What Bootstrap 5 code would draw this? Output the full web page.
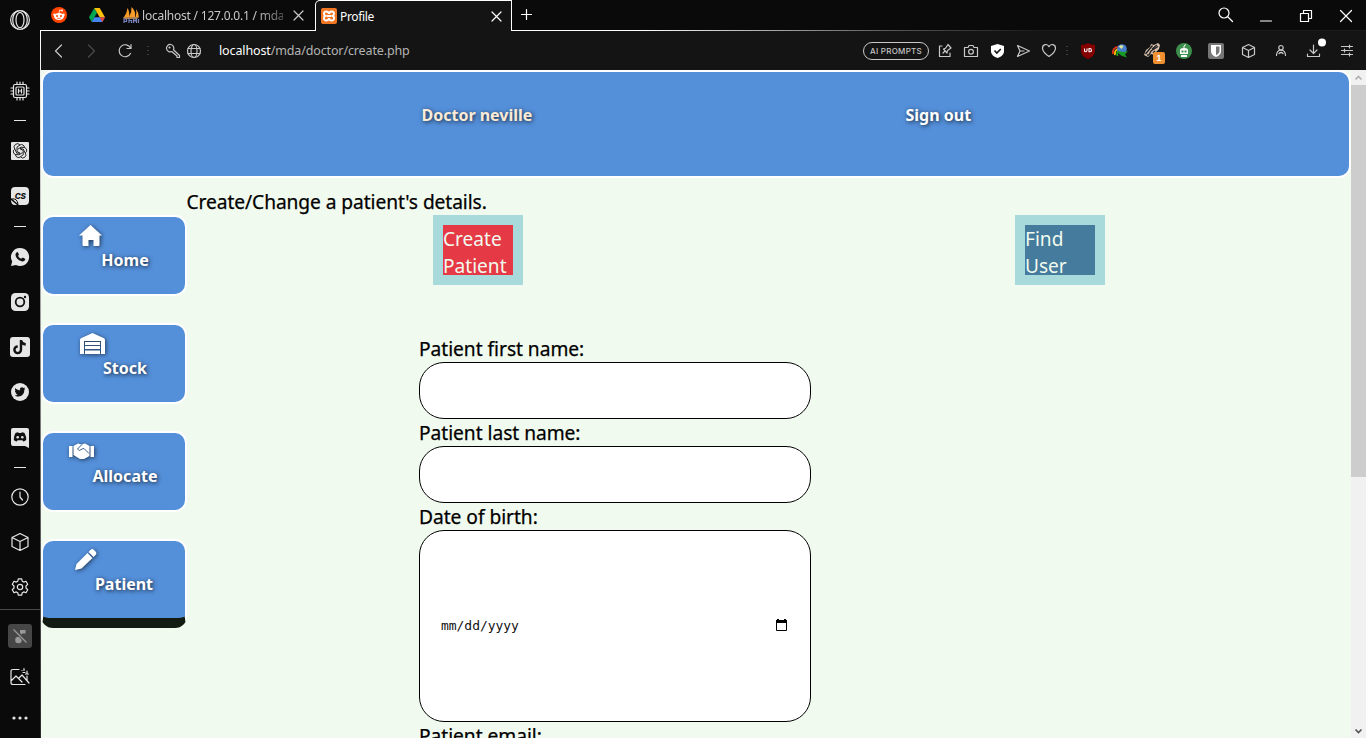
<!DOCTYPE html>
<html lang="en">
<head>
<meta charset="utf-8">
<title>Profile</title>
<link href="https://cdn.jsdelivr.net/npm/bootstrap@5.3.0/dist/css/bootstrap.min.css" rel="stylesheet">
<style>
html,body{height:100%}
body{margin:0;overflow:hidden;background:#0a0a0a;font-family:"Noto Sans",sans-serif;font-size:20px;line-height:27px;color:#000}
svg{display:block;flex:none;overflow:visible}
.ln{fill:none;stroke:currentColor;stroke-width:1.2;stroke-linecap:round;stroke-linejoin:round}
/* sidebar */
.side{width:41px;color:#e6e6e6;background:linear-gradient(#fff,#777 55%,#222) right 30px/1px 100% no-repeat #0a0a0a;background-position:40px 30px;padding-right:1px}
.side>div{display:flex;align-items:center;justify-content:center;flex:none;height:45px}
.side>.logo{height:40px;margin-bottom:28px}
.side>.dash{height:16px}.side>.dash.tight{height:15px}
.dash:before{content:"";width:12px;height:1px;background:#e6e6e6}
.side>.first{height:52px;border-top:1px solid #4a4a4a}
.first span{width:24px;height:24px;background:#464646;border-radius:3px;color:#999;display:grid;place-items:center}
.side>.shot{height:32px}.side>.dots{height:50px}
/* window chrome */
.tabs{height:31px;color:#c8c8c8;font:12px/18px "Noto Sans",sans-serif}
.tabs>.idle{width:274px;border-bottom:1px solid #fff;padding-left:10px}
.tabs>.active{width:197px;background:#141414;border:1px solid #fff;border-bottom:0;border-top-left-radius:5px;color:#fff;padding:0 10px 0 5px}
.tabs>.rest{background:linear-gradient(90deg,#fff 15%,#555 45%,#1a1a1a 62%) bottom/100% 1px no-repeat;color:#fff;padding:0 14px 0 9px}
.tabs span{padding-top:2px}
.fade-title{width:141px;white-space:nowrap;letter-spacing:-.22px;-webkit-mask:linear-gradient(90deg,#000 80%,#0006)}
.bar{height:39px;background:#141414;color:#c8c8c8;padding-left:1px;padding-right:3px}
.slot{display:flex;align-items:center;justify-content:center;flex:none;width:33px;position:relative}
.s26{width:26px}.s32{width:32px}.s21{width:21px}.s13{width:13px}.s8{width:10px}
.url{font:12.5px "Noto Sans",sans-serif;letter-spacing:-.13px;color:#b4b4b4;margin-left:15px}.url b{font-weight:400;color:#fff}
.pill{width:66px;height:18px;border:1px solid #c8c8c8;border-radius:9px;font:500 8px/16px Inter,sans-serif;letter-spacing:.28px;text-align:center;margin-right:3px;color:#c4c4c4}
.count{position:absolute;left:17px;top:9px;width:12px;height:12px;background:#f09030;border-radius:2px;color:#fff;font:bold 9px/12px "Liberation Sans",sans-serif;text-align:center}
/* page */
.page{background:#f0faee;min-height:0}
.banner{height:108px;background:#548fd9;border:2px solid #fff;border-radius:12px;padding:31px 0 0 378.5px;color:#fff;font-weight:700;font-size:16px;line-height:24px}
.banner span,.tile{text-shadow:1px 1px 4px rgba(0,0,0,.75)}
.banner .who{width:484px;color:#faebd7}
.intro{margin:10px 0 0 145.5px;font-size:19.2px;letter-spacing:-.08px;-webkit-text-stroke:.25px #000}
.menu{width:146px;gap:27px}
.tile{height:81px;background:#548fd9;border:2px solid #fff;border-radius:12px;color:#fff;font-weight:700;font-size:16px;line-height:22px;padding:7px 0 0 22px}
.tile.now{height:89px;border-bottom:10px solid #131c12;padding-left:20px}
.tile svg{margin-left:-23.5px;margin-top:-1px;margin-bottom:1px;filter:drop-shadow(1px 1px 2px rgba(0,0,0,.6));height:25px;width:25px}
.tile.now svg{margin-left:-22px}
.choice{width:90px;height:70px;border:10px solid #a8dadc;background:#e63946;color:#f1faee;font-size:19.1px;padding-top:1px}
.choice.find{background:#457b9d}
.entry{width:392px;margin:50px 0 0 232px;font-size:19.2px;letter-spacing:-.04px;-webkit-text-stroke:.25px #000}
.field{height:57px;background:#fff;border:1px solid #000;border-radius:25px}
.field.day{height:192px;padding:0 23px 0 21px;font:13px "DejaVu Sans Mono",monospace;-webkit-text-stroke:0}
.day span{margin-top:-1px;color:#111}.day svg{margin-top:-2px}
.scroll{width:15px;background:#f1f1f1;color:#555}
.thumb{height:392px;background:#cdcdcd}
</style>
</head>
<body>
<div class="d-flex h-100">
<aside class="side d-flex flex-column flex-shrink-0">
<div class="logo"><svg class="ln" width="20" height="20" viewBox="0 0 20 20"><circle cx="10" cy="10" r="9.4"/><ellipse cx="10" cy="10" rx="4" ry="7.7"/><path d="M8 .9C1 4 1 16 8 19.100M12 .9C19 4 19 16 12 19.100"/></svg></div>
<div><svg class="ln" width="18" height="18" viewBox="0 0 18 18"><rect x="2.500" y="2.500" width="13" height="13" rx="1.500"/><rect x="5" y="5" width="8" height="8" rx="1"/><path d="M7.500 7v4M10.500 7v4M7.500 9h3M6 0v2M9 0v2M12 0v2M6 16v2M9 16v2M12 16v2M0 6h2M0 9h2M0 12h2M16 6h2M16 9h2M16 12h2"/></svg></div>
<div class="dash tight"></div>
<div><svg width="18" height="18" viewBox="0 0 18 18"><rect width="18" height="18" rx="1" fill="#e6e6e6"/><g fill="none" stroke="#111" stroke-width=".9"><path d="M9 3a3 3 0 0 1 4.500 2.500A3 3 0 0 1 14.200 11 3 3 0 0 1 9.500 14.800 3 3 0 0 1 4.500 12.500 3 3 0 0 1 3.800 7 3 3 0 0 1 9 3z"/><path d="M9 3L6 5v4.500l3 1.700M13.500 5.500L10 5.200 6.500 7.300M14.200 11l-2-4L9 6.500M9.500 14.800l2.700-2V8.500L9 6.800M4.500 12.500l3.500.3 3.500-2.200M3.800 7l2 4.200L9 11.200"/></g></svg></div>
<div><svg width="18" height="18" viewBox="0 0 18 18"><path fill="#e6e6e6" d="M4 0h10q4 0 4 4v10q0 4-4 4H8L0 11V4q0-4 4-4zM0 13l6 5H4q-4 0-4-5z"/><path d="M1 12q5-1 6 5" stroke="#0a0a0a" fill="none"/><text x="9.300" y="12" text-anchor="middle" font-family="Inter" font-style="italic" font-weight="800" font-size="8" fill="#111">CS</text></svg></div>
<div class="dash"></div>
<div><svg width="18" height="18" viewBox="0 0 18 18"><path fill="#e6e6e6" d="M9 0a9 9 0 1 1-4 17L0 18l1.200-4.500A9 9 0 0 1 9 0z"/><path fill="#111" d="M5.500 4.500q1-.9 1.600.2l.8 1.800q.1.500-.8 1.400 1 2 3.100 2.900l1-1q.5-.3 1 0l1.700.9q.6.300.2 1.200-1.200 2-3.500 1.300C7 12 4.800 9.500 4.500 7.200q-.1-1.600 1-2.700z"/></svg></div>
<div><svg width="18" height="18" viewBox="0 0 18 18"><rect width="18" height="18" rx="4.500" fill="#e6e6e6"/><circle cx="9" cy="9" r="4.300" fill="none" stroke="#111" stroke-width="1.800"/><circle cx="14" cy="4" r="1.200" fill="#111"/></svg></div>
<div><svg width="20" height="20" viewBox="0 0 20 20"><rect width="20" height="20" rx="3" fill="#e6e6e6"/><path d="M11 3v9.800a3.300 3.300 0 1 1-3.300-3.300M11 3.500q.8 3.500 4.700 4" fill="none" stroke="#111" stroke-width="2.400"/></svg></div>
<div><svg width="18" height="18" viewBox="0 0 18 18"><circle cx="9" cy="9" r="9" fill="#e6e6e6"/><path fill="#111" d="M14.500 5.500l-1.200 1.300c.2 4-2.500 6.700-5.800 6.700-1.600 0-2.800-.4-3.700-1 1.300 0 2.200-.3 2.900-.9-1-.1-1.700-.7-2-1.500h.9C4.500 9.700 3.900 8.800 3.900 7.800l.9.200C3.900 7.300 3.700 6 4.200 5.100c1.200 1.400 2.700 2.100 4.700 2.300-.5-3 2.400-3.900 3.700-2.400l1.400-.5-.8 1.200z"/></svg></div>
<div style="padding-top:2px"><svg width="18" height="20" viewBox="0 0 18 20"><path fill="#e6e6e6" d="M2 0h14q2 0 2 2v18l-4-2H2q-2 0-2-2V2Q0 0 2 0z"/><path fill="#111" d="M4.500 5Q6 4.300 7.200 4.200l.5.800h2.600l.5-.8q1.500.2 2.700.8 2 3.500 1.700 7-1.500 1.200-3 1.500l-.8-1.300H6.600l-.8 1.300q-1.700-.4-3-1.500Q2.500 8.200 4.500 5z"/><circle cx="6.700" cy="9.300" r="1.300" fill="#e6e6e6"/><circle cx="11.300" cy="9.300" r="1.300" fill="#e6e6e6"/></svg></div>
<div class="dash tight" style="padding-top:1px"></div>
<div><svg class="ln" width="18" height="18" viewBox="0 0 18 18"><circle cx="9" cy="9" r="8.200"/><path d="M9 4v5l2.500 3"/></svg></div>
<div><svg class="ln" width="18" height="18" viewBox="0 0 18 18"><path d="M9 .5l8 4v9l-8 4-8-4v-9zM1 4.500l8 4 8-4M9 8.500v9"/></svg></div>
<div><svg class="ln" width="18" height="18" viewBox="0 0 18 18"><circle cx="9" cy="9" r="2.700"/><path d="M7.300.8h3.400l.5 2.400 1.500.9 2.300-.8 1.700 3L15 8v2l1.700 1.700-1.700 3-2.300-.8-1.500.9-.5 2.400H7.300l-.5-2.400-1.500-.9-2.300.8-1.700-3L3 10V8L1.300 6.300l1.700-3 2.300.8 1.500-.9z"/></svg></div>
<div class="first"><span><svg width="16" height="16" viewBox="0 0 16 16"><circle cx="6.500" cy="12" r="3.300" fill="currentColor"/><path d="M8 12V2h5.500v3.500H10V12" fill="currentColor"/><path d="M2 1l13 14" stroke="#464646" stroke-width="3.400"/><path d="M1.500 1.500l13 13" stroke="currentColor" stroke-width="1.300"/></svg></span></div>
<div class="shot"><svg class="ln" width="20" height="18" viewBox="0 0 20 18"><path d="M9 1.500H3q-2 0-2 2v11q0 2 2 2h12M17 8v5M1 13l5-5 6 6 M9 10l3-3 7 8M12 2.500v0M14 .5v2M13 4.500h2M17 3v3M15.500 6h3"/></svg></div>
<div class="dots"><svg width="16" height="4" viewBox="0 0 16 4" fill="currentColor"><circle cx="2" cy="2" r="1.600"/><circle cx="8" cy="2" r="1.600"/><circle cx="14" cy="2" r="1.600"/></svg></div>
</aside>

<div class="flex-grow-1 d-flex flex-column">
<div class="tabs d-flex flex-shrink-0">
 <div class="idle d-flex align-items-center">
  <svg width="16" height="16" viewBox="0 0 16 16"><circle cx="8" cy="8" r="8" fill="#ff4500"/><ellipse cx="8" cy="9.500" rx="5" ry="3.500" fill="#fff"/><circle cx="3.500" cy="7.700" r="1.200" fill="#fff"/><circle cx="12.500" cy="7.700" r="1.200" fill="#fff"/><circle cx="11" cy="3.500" r="1" fill="#fff"/><path d="M8 6l.7-3 2.300.5" fill="none" stroke="#fff" stroke-width=".8"/><path d="M6 11q2 1 4 0" fill="none" stroke="#ff4500" stroke-width=".7"/><circle cx="6" cy="9" r="1" fill="#ff4500"/><circle cx="10" cy="9" r="1" fill="#ff4500"/></svg>
  <svg style="margin-left:22px" width="16" height="14" viewBox="0 0 16 14"><path d="M5.300 0L0 9.300 2.700 14 8 4.700z" fill="#00a651"/><path d="M5.300 0h5.400L16 9.300h-5.300z" fill="#ffc107"/><path d="M5.400 9.300H16L13.300 14H2.700z" fill="#4285f4"/><path d="M10.700 9.300H16L13.300 14z" fill="#ea4335"/></svg>
  <svg style="margin-left:18px" width="16" height="16" viewBox="0 0 16 16"><path d="M1 10Q4 6 4.500 1 7 5 6 10zM6 10Q9 5 8.500 0 13 4 12 10zM12.500 10q1.500-4 .5-8 3 4 2.800 8z" fill="#f89c2a"/><path d="M0 10h16l-2 2H1z" fill="#b78345"/><path d="M1 16v-4h2.500v2.500H1M6 11v5M6 13.500h2.500V16M10.500 16v-4l1.500 2 1.500-2v4M15.500 16v-4" stroke="#7b83bd" stroke-width="1.200" fill="none"/></svg>
  <span class="fade-title" style="margin-left:3px">localhost / 127.0.0.1 / mda</span>
  <svg class="ln ms-auto" style="margin-right:12px" width="9" height="9" viewBox="0 0 9 9"><path d="M0 0l9 9M9 0L0 9"/></svg>
 </div>
 <div class="active d-flex align-items-center">
  <svg width="16" height="16" viewBox="0 0 16 16"><rect width="16" height="16" rx="2" fill="#f37623"/><path d="M5.200 3.500a2.200 2.200 0 0 0 0 4.400 2.300 2.300 0 0 0 0 4.600Q7.500 12.500 8 10.200 8.500 12.500 10.800 12.500a2.300 2.300 0 0 0 0-4.600 2.200 2.200 0 0 0 0-4.400Q8.500 3.500 8 5.700 7.500 3.500 5.200 3.500zM5.500 8h5" fill="none" stroke="#fff" stroke-width="1.800"/></svg>
  <span style="margin-left:3px;padding-top:1px;letter-spacing:-.35px">Profile</span>
  <svg class="ln ms-auto" width="9" height="9" viewBox="0 0 9 9"><path d="M0 0l9 9M9 0L0 9"/></svg>
 </div>
 <div class="rest flex-grow-1 d-flex align-items-center">
  <svg class="ln" style="margin-top:-3px" width="11" height="11" viewBox="0 0 11 11"><path d="M5.500.5v10M.5 5.500h10"/></svg>
  <svg class="ln ms-auto" style="margin-top:-3px" width="15" height="15" viewBox="0 0 15 15"><circle cx="6" cy="6" r="5"/><path d="M10 10l4.500 4.500"/></svg>
  <svg class="ln" style="margin-left:27px" width="12" height="12" viewBox="0 0 12 12"><path d="M.5 11h11"/></svg>
  <svg class="ln" style="margin-left:28px" width="12" height="12" viewBox="0 0 12 12"><path d="M.5 3.500h8v8h-8zM3.500 3V.5h8v8H9"/></svg>
  <svg class="ln" style="margin-left:28px" width="12" height="12" viewBox="0 0 12 12"><path d="M.5.5l11 11M11.500.5l-11 11"/></svg>
 </div>
</div>

<div class="bar d-flex align-items-center flex-shrink-0">
 <span class="slot"><svg class="ln" width="7" height="12" viewBox="0 0 7 12"><path d="M6.500 0l-6 6 6 6"/></svg></span>
 <span class="slot" style="color:#4a4a4a"><svg class="ln" width="7" height="12" viewBox="0 0 7 12"><path d="M.5 0l6 6-6 6"/></svg></span>
 <span class="slot"><svg class="ln" width="14" height="14" viewBox="0 0 14 14"><path d="M12.500 9.500A6 6 0 1 1 12.500 4M13 .5v4H9"/></svg></span>
 <span class="slot s13"><svg width="2" height="12" fill="#3c3c3c"><path d="M0 1h2v1H0zM0 5h2v1H0zM0 9h2v1H0z"/></svg></span>
 <span class="slot s21 ms-2"><svg class="ln" width="14" height="14" viewBox="0 0 14 14"><path d="M7.500 5.800l6 5.700v2h-2.500v-1.500L5.800 7.500A3.700 3.700 0 1 1 7.500 5.800z"/><circle cx="3.500" cy="3.500" r=".5"/></svg></span>
 <span class="slot s21"><svg class="ln" width="14" height="14" viewBox="0 0 14 14"><circle cx="7" cy="7" r="6.500"/><ellipse cx="7" cy="7" rx="3" ry="6.500"/><path d="M1 4.500h12M1 9.500h12"/></svg></span>
 <span class="url"><b>localhost</b>/mda/doctor/create.php</span>
 <span class="pill ms-auto">AI PROMPTS</span>
 <span class="slot s26"><svg class="ln" width="13" height="13" viewBox="0 0 13 13"><path d="M3 2H.5v10.500H11V9M4 9l2-2M4.500 5l3.500 4 .5-2.500L12 4 9 .5 6.500 4.300z"/></svg></span>
 <span class="slot s26"><svg class="ln" width="14" height="12" viewBox="0 0 14 12"><path d="M.5 2.500h3.500L5 .5h4l1 2h3.500v9H.5z"/><circle cx="7" cy="6.800" r="2.400"/></svg></span>
 <span class="slot s26"><svg width="13" height="14" viewBox="0 0 13 14"><path d="M6.500 0L13 2v6q-1 4.500-6.500 6Q1 12.500 0 8V2z" fill="#fff"/><path d="M3.500 6.500l2.300 2.500 4-4" fill="none" stroke="#141414" stroke-width="1.600"/></svg></span>
 <span class="slot s26"><svg class="ln" width="13" height="12" viewBox="0 0 13 12"><path d="M.5.500L12.500 6 .5 11.500 3 6zM3 6h4"/></svg></span>
 <span class="slot s26"><svg class="ln" width="14" height="13" viewBox="0 0 14 13"><path d="M7 12.500Q.5 8 .5 4.200C.5 0 5.500-.7 7 2.700 8.500-.7 13.500 0 13.500 4.200 13.500 8 7 12.500 7 12.500z"/></svg></span>
 <span class="slot s8"><svg width="2" height="12" fill="#3c3c3c"><path d="M0 1h2v1H0zM0 5h2v1H0zM0 9h2v1H0z"/></svg></span>
 <span class="slot s32"><svg width="14" height="16" viewBox="0 0 14 16"><path d="M7 0q3 2 7 2v6q0 5-7 8Q0 13 0 8V2q4 0 7-2z" fill="#850000"/><path d="M3.500 5.500v2q0 1.300 1.200 1.300T6 7.500v-2M8 5.500v3.300h.8a1.600 1.600 0 0 0 0-3.300z" fill="none" stroke="#fff" stroke-width="1.100"/></svg></span>
 <span class="slot s32"><svg width="16" height="14" viewBox="0 0 16 14"><path d="M7 3Q0 3 1 10" fill="none" stroke="#e83418" stroke-width="1.800"/><path d="M8 5Q2 5 3 11" fill="none" stroke="#ffcb00" stroke-width="1.800"/><path d="M8 7Q4 7 5.500 12" fill="none" stroke="#20a520" stroke-width="1.800"/><circle cx="10" cy="5" r="4.800" fill="#477fcc"/><path d="M6.500 2.500q3-3 5 0l-2 2.500z" fill="#d9e49b"/><path d="M6 7l6 1 4-1-3 3.500 2 3-5-1.500-3-2z" fill="#179b26"/></svg></span>
 <span class="slot s32"><svg width="16" height="15" viewBox="0 0 16 15"><path d="M0 12L2 7l4-3 1-3 3 1 4-2 2 2-1 4-3 3-1 3-4-1-3 3z" fill="#d8c0ac"/><path d="M1.500 11l4-5 3-3.500M5 12l2-4 7-4.500M8 6l5-4M3 12h2M9 10l2-2" stroke="#222" stroke-width="1.400" fill="none"/></svg><span class="count">1</span></span>
 <span class="slot s32"><svg width="16" height="16" viewBox="0 0 16 16"><circle cx="8" cy="8" r="8" fill="#3c8f4c"/><path d="M4 7q0-2 4-2t4 2v4H4zM5 12h6v2H5z" fill="#fff"/><path d="M8 5V3l2-1.500" stroke="#fff" fill="none"/><path d="M5.500 7.500h2v2h-2zM8.500 7.500h2v2h-2z" fill="#3c8f4c"/></svg></span>
 <span class="slot s32"><svg width="16" height="16" viewBox="0 0 16 16"><rect width="16" height="16" rx="2" fill="#777"/><path d="M3 2h10v6q0 4-5 6-5-2-5-6z" fill="#fff"/><path d="M8 3.500h3.500V8q0 2.500-3.500 4.300z" fill="#777"/></svg></span>
 <span class="slot s32"><svg class="ln" width="13" height="14" viewBox="0 0 13 14"><path d="M6.500.5l6 3v7l-6 3-6-3v-7zM.5 3.500l6 3 6-3M6.500 6.500v7"/></svg></span>
 <span class="slot"><svg class="ln" width="10" height="11" viewBox="0 0 10 11"><circle cx="5" cy="2.700" r="2.200"/><path d="M.5 10.500q0-5 4.500-5.500 4.500.5 4.500 5.500M3 8.500q2-2 4 0"/></svg></span>
 <span class="slot"><svg class="ln" width="13" height="12" viewBox="0 0 13 12"><path d="M6.500 0v8M3 5l3.500 3.500L10 5M.5 9v2.500h12V9"/><circle cx="15" cy="-2.500" r="4" fill="#fff" stroke="none"/></svg></span>
 <span class="slot"><svg class="ln" width="12" height="11" viewBox="0 0 12 11"><path d="M.5 1.500h11M.5 5.500h11M.5 9.500h11M8.500 0v3M3.500 4v3M8.500 8v3"/></svg></span>
</div>

<div class="page flex-grow-1 d-flex overflow-hidden">
<main class="flex-grow-1">
 <header class="banner d-flex"><span class="who">Doctor neville</span><span>Sign out</span></header>
 <div class="intro">Create/Change a patient's details.</div>
 <div class="d-flex align-items-start">
  <nav class="menu d-flex flex-column">
   <div class="tile d-flex justify-content-center"><div><svg viewBox="0 0 25 25"><path fill="#fff" d="M12.500 2L24 12.500h-2.500V22q0 1-1 1h-5v-6h-5v6h-5q-1 0-1-1v-9.500H1z"/></svg>Home</div></div>
   <div class="tile d-flex justify-content-center"><div><svg viewBox="0 0 25 25"><path fill="#fff" d="M0 23V9q0-1.500 1.500-2L12.500 2l11 5Q25 7.500 25 9v14h-4V10H4v13z"/><path fill="#fff" d="M5 11h15v3H5zM5 15h15v3H5zM5 19.500h15V23H5z"/></svg>Stock</div></div>
   <div class="tile d-flex justify-content-center"><div><svg viewBox="0 0 25 25"><path fill="#fff" d="M0 7h3.500v11H0zM21.500 7H25v11h-3.500zM4.500 7L9 4.500l3.500 1 3.500-1L20.500 7v10L15 20h-4l-6.500-4z"/><path d="M13 5.500L8.500 10q1.500 3 4.500 0l2-.5 5 5" fill="none" stroke="#3c5f90"/></svg>Allocate</div></div>
   <div class="tile now d-flex justify-content-center"><div><svg viewBox="0 0 25 25"><path fill="#fff" d="M2 23l1.500-6L14.500 6l5 5L8.500 21.500zM15.500 5L18 2.500q1.500-1 3 .5l1.500 1.500q1.500 1.500.5 3L20.500 10z"/></svg>Patient</div></div>
  </nav>
  <section class="flex-grow-1">
   <div class="row g-0">
    <div class="col-6 d-flex justify-content-center"><div class="choice">Create Patient</div></div>
    <div class="col-6 d-flex justify-content-center"><div class="choice find">Find User</div></div>
   </div>
   <div class="entry">
    <div>Patient first name:</div><div class="field"></div>
    <div>Patient last name:</div><div class="field"></div>
    <div>Date of birth:</div>
    <div class="field day d-flex align-items-center justify-content-between"><span>mm/dd/yyyy</span><svg width="11" height="12" viewBox="0 0 11 12"><path d="M.5 1.500h10v10H.5z" fill="none" stroke="#000"/><path d="M0 1h1V0h2v1h5V0h2v1h1v3H0z"/></svg></div>
    <div>Patient email:</div>
   </div>
  </section>
 </div>
</main>
<div class="scroll d-flex flex-column align-items-center flex-shrink-0">
 <svg width="15" height="15" viewBox="0 0 15 15"><path d="M4.500 9.500l3-3 3 3" fill="none" stroke="#b0b0b0" stroke-width="1.700"/></svg>
 <div class="thumb w-100"></div>
 <svg class="mt-auto" width="15" height="15" viewBox="0 0 15 15"><path d="M4.500 6.500l3 3 3-3" fill="none" stroke="#555" stroke-width="1.700"/></svg>
</div>
</div>
</div>
</div>
<script src="https://cdn.jsdelivr.net/npm/bootstrap@5.3.0/dist/js/bootstrap.bundle.min.js"></script>
</body>
</html>
